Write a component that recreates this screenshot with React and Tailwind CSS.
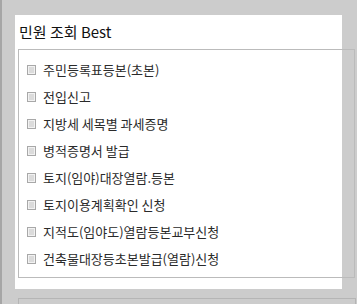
import React from 'react';

const items = [
  '주민등록표등본(초본)',
  '전입신고',
  '지방세 세목별 과세증명',
  '병적증명서 발급',
  '토지(임야)대장열람.등본',
  '토지이용계획확인 신청',
  '지적도(임야도)열람등본교부신청',
  '건축물대장등초본발급(열람)신청',
];

const DocIcon = () => (
  <svg width="9" height="10" viewBox="0 0 9 10" className="shrink-0">
    <rect x="0.5" y="0.5" width="8" height="9" fill="#f2f2f2" stroke="#a8a8a8" />
    <line x1="2" y1="3" x2="7" y2="3" stroke="#c4c4c4" />
    <line x1="2" y1="5" x2="7" y2="5" stroke="#c4c4c4" />
    <line x1="2" y1="7" x2="7" y2="7" stroke="#c4c4c4" />
  </svg>
);

const App = () => {
  return (
    <div
      className="w-[357px] h-[304px] overflow-hidden bg-[#cccccc] border-l-2 border-[#a6a6a6] pl-[13px] pt-[15px]"
      style={{ fontFamily: '"Noto Sans CJK KR", "Noto Sans", sans-serif' }}
    >
      <div className="w-[327px] h-[274px] bg-white">
        <h2 className="h-[34px] flex items-center pl-[4px] text-[15px] text-[#111]">
          민원 조회 Best
        </h2>
        <ul className="ml-[3px] w-[337px] h-[229px] border border-[#bbbbbb] pt-[6px] pl-[8px]">
          {items.map((item) => (
            <li key={item} className="h-[27px] flex items-center gap-[7px] text-[13px] text-[#2a2a2a]">
              <DocIcon />
              <span>{item}</span>
            </li>
          ))}
        </ul>
      </div>
      <div className="mt-[9px] ml-[3px] w-[338px] h-[20px] border border-[#b5b5b5]" />
    </div>
  );
};

export default App;
